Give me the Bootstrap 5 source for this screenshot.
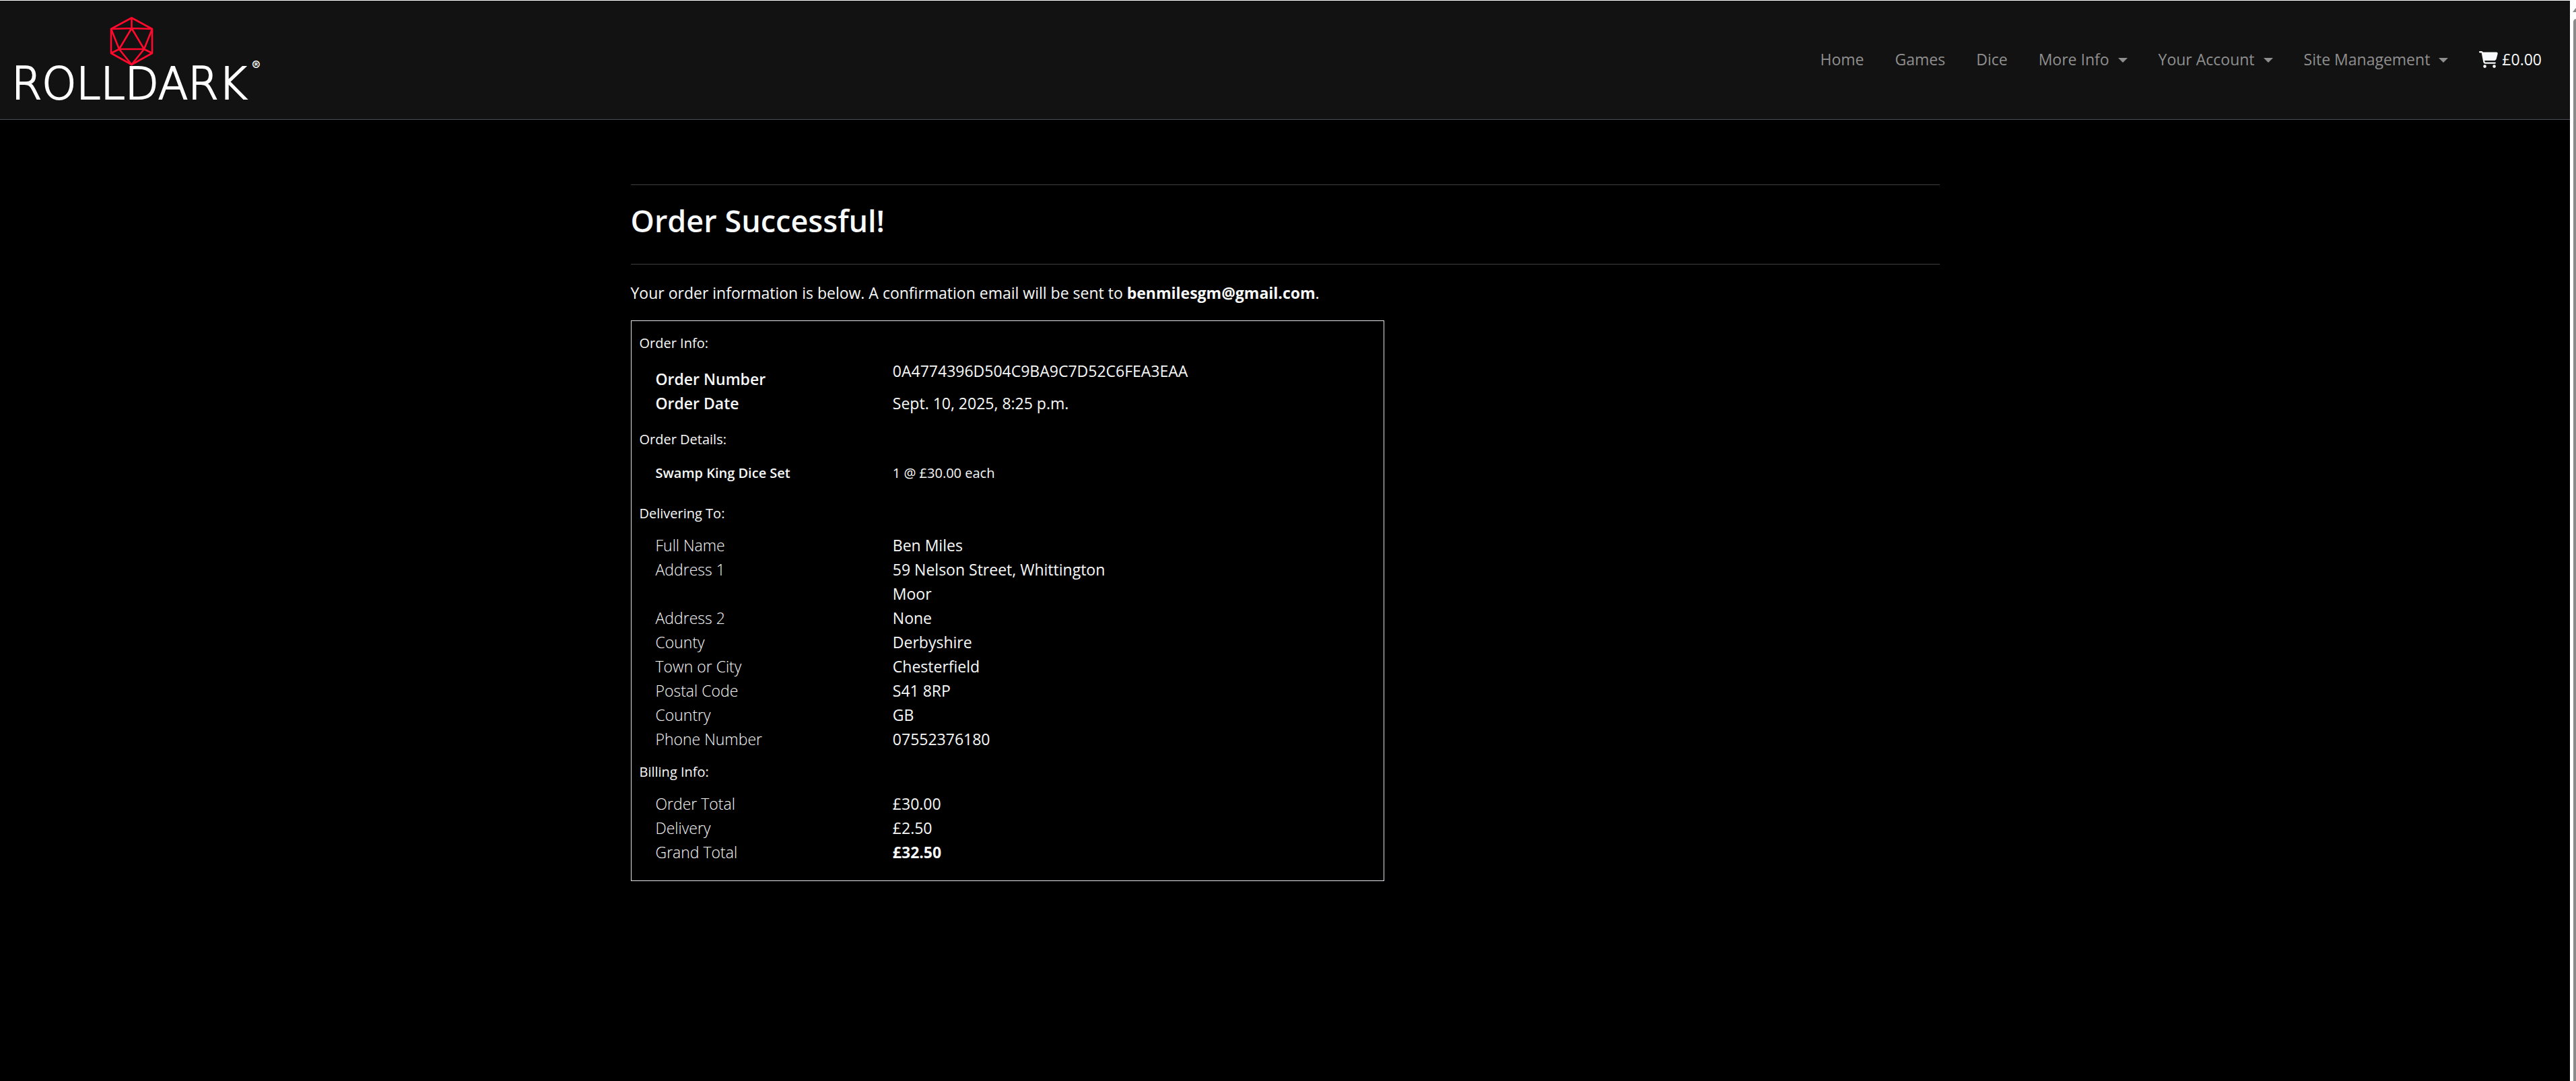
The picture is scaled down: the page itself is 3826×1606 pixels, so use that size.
<!DOCTYPE html>
<html lang="en">
<head>
<meta charset="utf-8">
<meta name="viewport" content="width=device-width, initial-scale=1">
<title>Rolldark - Order Successful</title>
<link href="https://cdn.jsdelivr.net/npm/bootstrap@5.3.0/dist/css/bootstrap.min.css" rel="stylesheet">
<style>
  html { font-size: 24px; }
  body {
    font-family: "Open Sans", "Noto Sans", sans-serif;
    font-size: 23px; line-height: 36px;
    color: #f8f9fa; background: #000;
    border-top: 1px solid #fff;
  }
  .site-header { background: #121212; border-bottom: 1px solid #495057; padding: 0 18px 0 20px; min-height: 177px; }
  .brand-logo { width: 376px; height: 140px; display: block; overflow: visible; }
  .brand-logo text { fill: #fff; }
  .brand-name { font-family: "DejaVu Sans Light", "DejaVu Sans", sans-serif; font-weight: 200; stroke: #fff; stroke-width: 2; }
  .brand-mark { font-family: Inter, sans-serif; font-weight: 600; }
  .site-header .navbar-nav { padding-bottom: 2px; }
  .site-header .navbar-nav .nav-link { padding: 0 24px 0 22px; color: #8f8f8f; }
  .site-header .dropdown-toggle::after { margin-left: 13px; vertical-align: 4px; border-width: 7px 7px 0; }
  .site-header .navbar-nav .cart-link { color: #f8f9fa; }
  .cart-link svg { width: 28px; height: 27px; margin-right: 6px; }
  .page-width { max-width: 1980px; padding-top: 96px; }
  hr { margin: 0; border-color: #404040; opacity: 1; }
  h1 { font-size: 45px; line-height: 58px; font-weight: 600; margin: 24px 0 35px; }
  .intro { margin: 24px 0 23px; }
  .order-box { border: 1px solid #dee2e6; padding: 15px 12px 0; }
  .order-box h2 { font-size: 20px; line-height: 36px; font-weight: 400; margin: 0; }
  .lines { display: grid; grid-template-columns: 1fr 2fr; padding: 0 12px 0 24px; margin: 11px 0 13px; }
  .lines dt { font-weight: 300; }
  .lines dd { margin: 0; }
  .lines.strong-labels { margin: 5px 0 18px; }
  .lines.strong-labels dt { font-weight: 600; }
  .lines.strong-labels dt.low { padding-top: 12px; }
  .lines.item-lines { font-size: 20px; margin: 14px 0 24px; }
  .lines.narrow-values { grid-template-columns: 1fr 1fr 1fr; }
  .lines.narrow-values dt { grid-column: 1; }
  .lines.narrow-values dd { grid-column: 2; }
  .scroll-strip { width: 9px; background: #fff; overflow: hidden; padding-left: 5px; }
  .scroll-strip svg { width: 14px; height: 9px; display: block; margin: 8px 0 10px -1px; }
  .scroll-thumb { width: 9px; background: #8b8b8b; border-radius: 5px 5px 0 0; }
</style>
<script src="https://cdn.jsdelivr.net/npm/bootstrap@5.3.0/dist/js/bootstrap.bundle.min.js"></script>
</head>
<body class="d-flex min-vh-100">
<div class="flex-grow-1">
  <header class="site-header navbar navbar-expand-lg">
    <a class="navbar-brand p-0 m-0" href="#" aria-label="Rolldark">
      <svg class="brand-logo" viewBox="20 20 376 140">
        <g fill="none" stroke="#ff0a2d" stroke-width="2.600" stroke-linejoin="round">
          <path d="M195.500 27.500 226 44V80L195.500 97 165 80V44Z"/>
          <path d="M195.500 27.500V43M165 44 195.500 43 226 44M195.500 43 177 74H214ZM165 44 177 74 165 80M226 44 214 74 226 80M177 74 195.500 97 214 74"/>
        </g>
        <text class="brand-name" x="17" y="148" font-size="65">ROLLDARK</text>
        <text class="brand-mark" x="374" y="105" font-size="19">®</text>
      </svg>
    </a>
    <nav class="ms-auto" aria-label="Main">
      <ul class="navbar-nav">
        <li class="nav-item"><a class="nav-link" href="#">Home</a></li>
        <li class="nav-item"><a class="nav-link" href="#">Games</a></li>
        <li class="nav-item"><a class="nav-link" href="#">Dice</a></li>
        <li class="nav-item dropdown"><a class="nav-link dropdown-toggle" href="#" role="button" data-bs-toggle="dropdown">More Info</a></li>
        <li class="nav-item dropdown"><a class="nav-link dropdown-toggle" href="#" role="button" data-bs-toggle="dropdown">Your Account</a></li>
        <li class="nav-item dropdown"><a class="nav-link dropdown-toggle" href="#" role="button" data-bs-toggle="dropdown">Site Management</a></li>
        <li class="nav-item"><a class="nav-link cart-link d-flex align-items-center" href="#"><svg viewBox="0 0 576 512" fill="currentColor" aria-hidden="true"><path d="M0 24C0 10.700 10.700 0 24 0H69.500c22 0 41.500 12.800 50.600 32h411c26.300 0 45.500 25 38.600 50.400l-41 152.300c-8.500 31.400-37 53.300-69.500 53.300H170.700l5.400 28.500c2.200 11.300 12.100 19.500 23.600 19.500H488c13.300 0 24 10.700 24 24s-10.700 24-24 24H199.700c-34.600 0-64.300-24.600-70.700-58.500L77.400 54.500c-.7-3.800-4-6.500-7.900-6.500H24C10.700 48 0 37.300 0 24zM128 464a48 48 0 1 1 96 0 48 48 0 1 1-96 0zm336-48a48 48 0 1 1 0 96 48 48 0 1 1 0-96z"/></svg>£0.00</a></li>
      </ul>
    </nav>
  </header>

  <main class="container page-width">
    <hr>
    <h1>Order Successful!</h1>
    <hr>
    <p class="intro">Your order information is below. A confirmation email will be sent to <strong>benmilesgm@gmail.com</strong>.</p>
    <div class="row">
      <div class="col-12 col-lg-7">
        <section class="order-box">
          <h2>Order Info:</h2>
          <dl class="lines strong-labels">
            <dt class="low">Order Number</dt><dd>0A4774396D504C9BA9C7D52C6FEA3EAA</dd>
            <dt>Order Date</dt><dd>Sept. 10, 2025, 8:25 p.m.</dd>
          </dl>
          <h2>Order Details:</h2>
          <dl class="lines strong-labels item-lines">
            <dt>Swamp King Dice Set</dt><dd>1 @ £30.00 each</dd>
          </dl>
          <h2>Delivering To:</h2>
          <dl class="lines narrow-values">
            <dt>Full Name</dt><dd>Ben Miles</dd>
            <dt>Address 1</dt><dd>59 Nelson Street, Whittington Moor</dd>
            <dt>Address 2</dt><dd>None</dd>
            <dt>County</dt><dd>Derbyshire</dd>
            <dt>Town or City</dt><dd>Chesterfield</dd>
            <dt>Postal Code</dt><dd>S41 8RP</dd>
            <dt>Country</dt><dd>GB</dd>
            <dt>Phone Number</dt><dd>07552376180</dd>
          </dl>
          <h2>Billing Info:</h2>
          <dl class="lines narrow-values mb-0 pb-3">
            <dt>Order Total</dt><dd>£30.00</dd>
            <dt>Delivery</dt><dd>£2.50</dd>
            <dt>Grand Total</dt><dd><strong>£32.50</strong></dd>
          </dl>
        </section>
      </div>
    </div>
  </main>
</div>
<aside class="scroll-strip d-flex flex-column flex-shrink-0" aria-hidden="true">
  <svg viewBox="0 0 14 9"><path d="M7 0 14 9H0Z" fill="#8b8b8b"/></svg>
  <div class="scroll-thumb flex-grow-1"></div>
</aside>
</body>
</html>
